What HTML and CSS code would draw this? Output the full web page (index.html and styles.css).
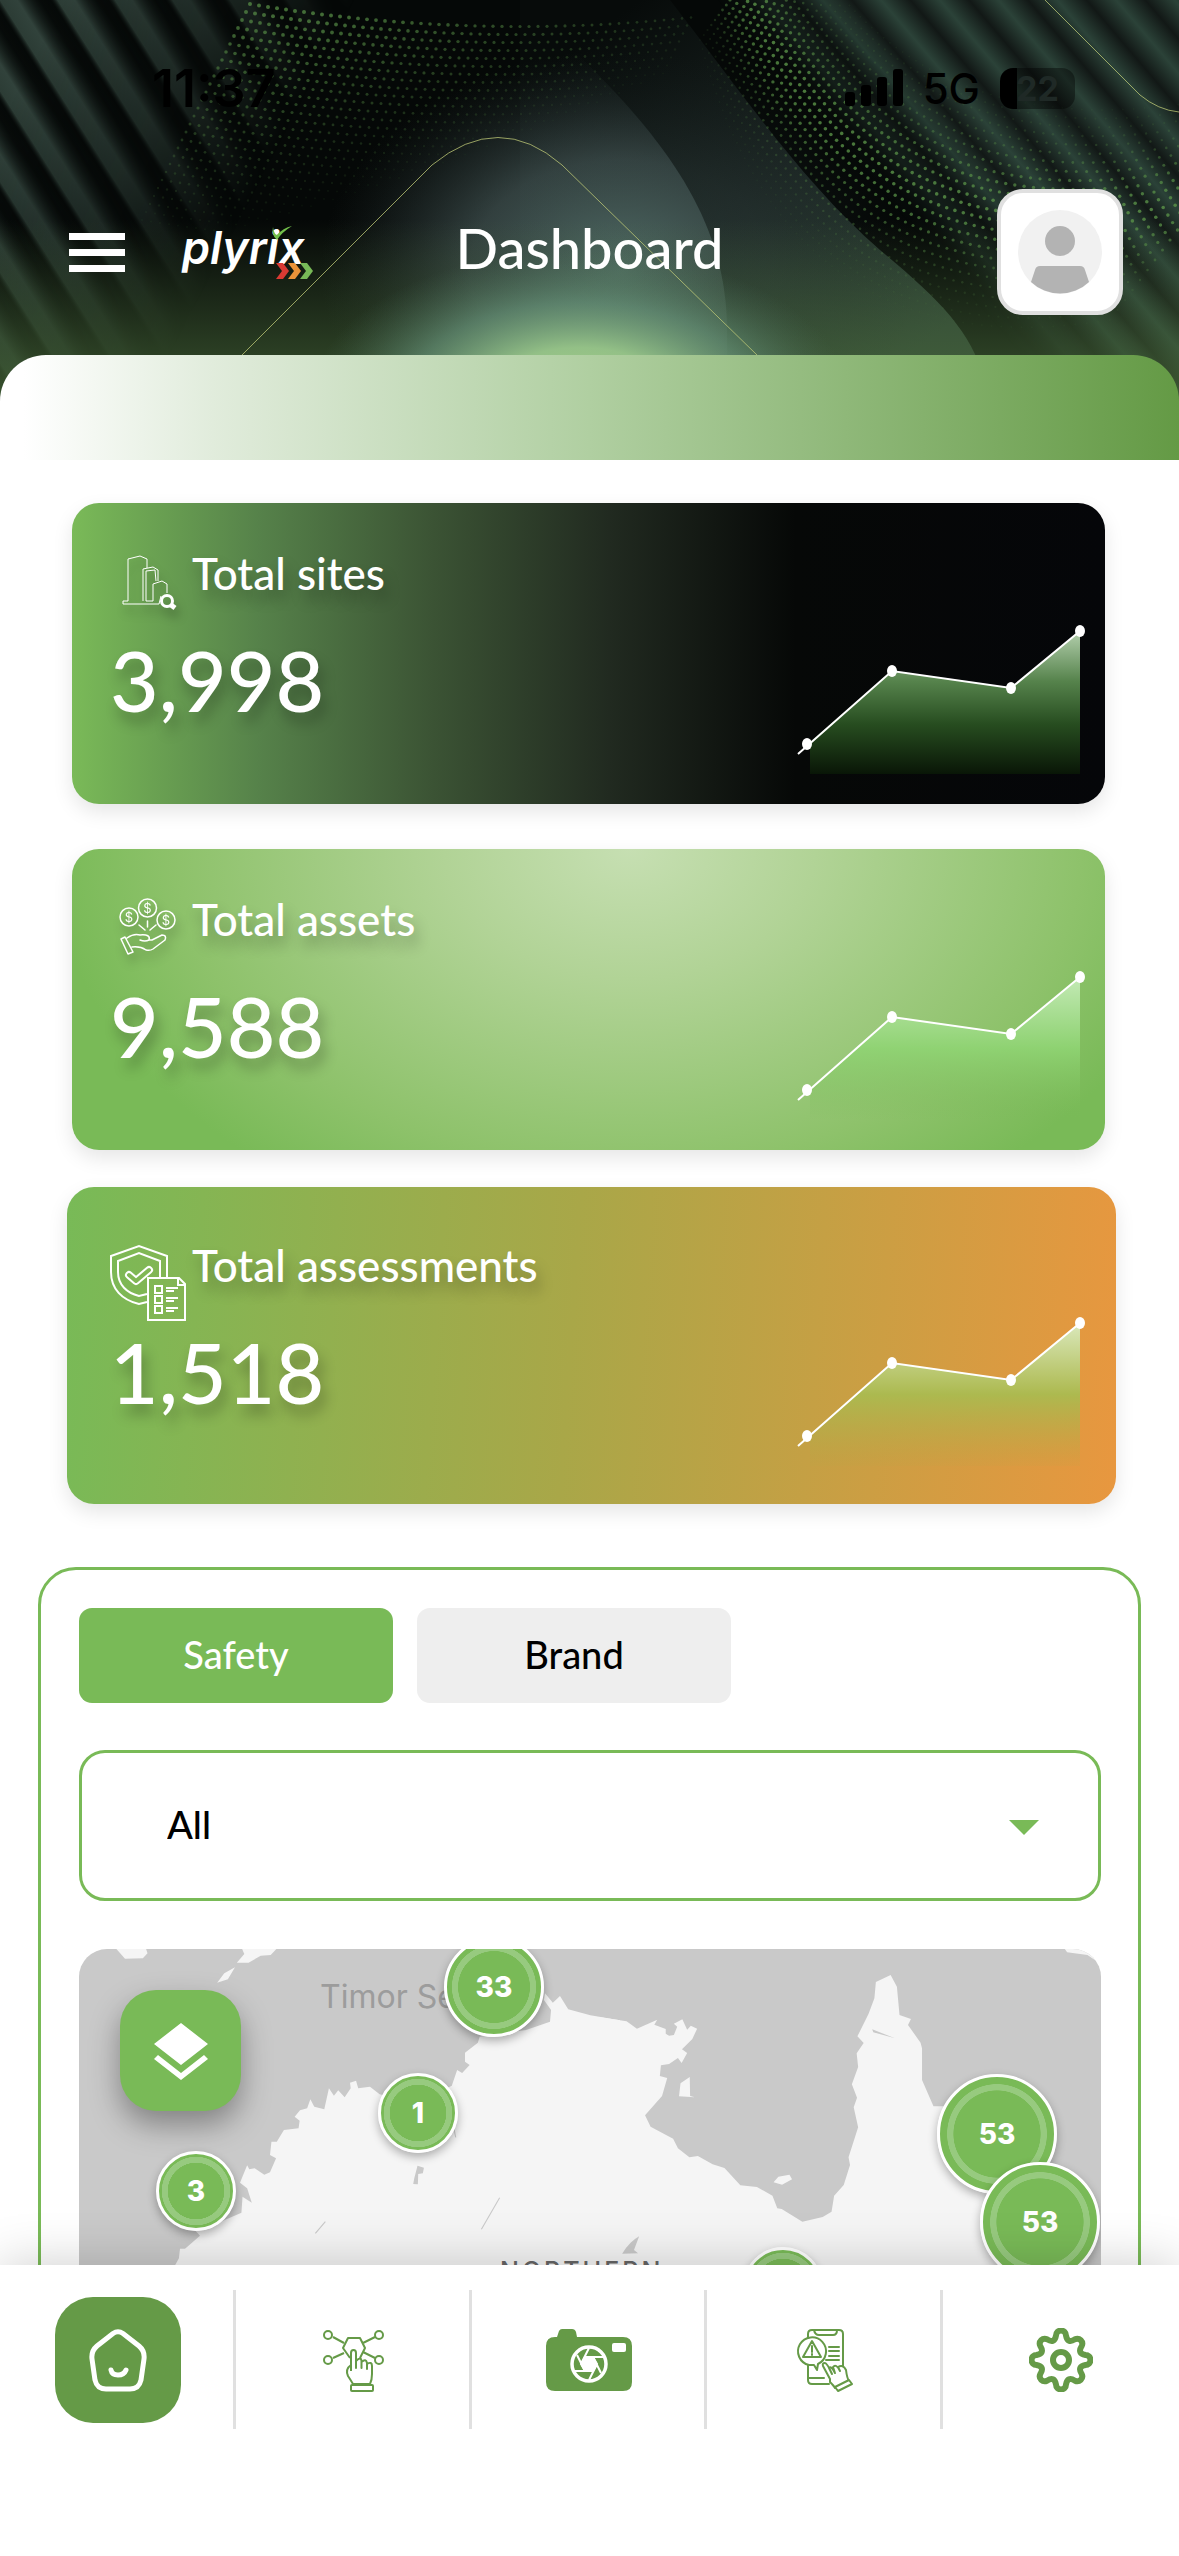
FILE: index.html
```html
<!DOCTYPE html>
<html lang="en">
<head>
<meta charset="utf-8">
<meta name="viewport" content="width=device-width, initial-scale=1">
<title>Plyrix – Dashboard</title>
<link rel="stylesheet" href="styles.css">
</head>
<body>
<div class="app">
  <main class="content">
    <header class="hero">
      <svg class="hero-art" viewBox="0 0 1179 460" preserveAspectRatio="none" aria-hidden="true">
        <defs>
          <linearGradient id="stripeL" gradientUnits="userSpaceOnUse" x1="0" y1="0" x2="41" y2="-26" spreadMethod="repeat">
            <stop offset="0" stop-color="#2c3c35"/><stop offset=".3" stop-color="#31423b"/><stop offset=".7" stop-color="#0a0f0d" stop-opacity=".4"/><stop offset=".88" stop-color="#0a0f0d" stop-opacity=".2"/><stop offset="1" stop-color="#2c3c35"/>
          </linearGradient>
          <linearGradient id="stripeR" gradientUnits="userSpaceOnUse" x1="0" y1="0" x2="34" y2="-29" spreadMethod="repeat">
            <stop offset="0" stop-color="#2b4238"/><stop offset=".5" stop-color="#121816"/><stop offset="1" stop-color="#2b4238"/>
          </linearGradient>
          <linearGradient id="fadeL" gradientUnits="userSpaceOnUse" x1="0" y1="120" x2="230" y2="240">
            <stop offset="0" stop-color="#fff"/><stop offset=".5" stop-color="#fff" stop-opacity=".6"/><stop offset="1" stop-color="#fff" stop-opacity="0"/>
          </linearGradient>
          <linearGradient id="fadeR" gradientUnits="userSpaceOnUse" x1="880" y1="190" x2="950" y2="130">
            <stop offset="0" stop-color="#fff" stop-opacity="0"/><stop offset="1" stop-color="#fff"/>
          </linearGradient>
          <mask id="maskL"><rect width="420" height="460" fill="url(#fadeL)"/></mask>
          <mask id="maskR"><rect x="700" width="479" height="460" fill="url(#fadeR)"/></mask>
          <radialGradient id="haze" gradientUnits="userSpaceOnUse" cx="0" cy="0" r="1" gradientTransform="translate(620 270) scale(300 220)">
            <stop offset="0" stop-color="#4f6a64"/><stop offset=".5" stop-color="#384746" stop-opacity=".85"/><stop offset="1" stop-color="#1a2322" stop-opacity="0"/>
          </radialGradient>
          <radialGradient id="glow" gradientUnits="userSpaceOnUse" cx="0" cy="0" r="1" gradientTransform="translate(580 400) scale(270 150)">
            <stop offset="0" stop-color="#a9d488"/><stop offset=".35" stop-color="#9ccb8e" stop-opacity=".9"/><stop offset=".65" stop-color="#6f9f86" stop-opacity=".55"/><stop offset="1" stop-color="#4b6e5c" stop-opacity="0"/>
          </radialGradient>
          <linearGradient id="floor" x1="0" y1="0" x2="0" y2="1">
            <stop offset="0" stop-color="#47663a" stop-opacity="0"/><stop offset="1" stop-color="#4b6e3b"/>
          </linearGradient>
          <linearGradient id="fold" gradientUnits="userSpaceOnUse" x1="640" y1="0" x2="900" y2="360">
            <stop offset="0" stop-color="#070b0a"/><stop offset=".5" stop-color="#1b2523"/><stop offset="1" stop-color="#2f4438"/>
          </linearGradient>
          <clipPath id="coreClip"><path d="M0 0H520C640 110 727 200 727 330V460H0Z"/></clipPath>
        </defs>
        <rect width="1179" height="460" fill="#050807"/>
        <rect width="420" height="460" fill="url(#stripeL)" mask="url(#maskL)"/>
        <rect x="700" width="479" height="460" fill="url(#stripeR)" mask="url(#maskR)"/>
        <path d="M520 0H670C740 90 800 180 880 250C940 300 970 330 985 380V460H520Z" fill="url(#fold)"/>
        <g clip-path="url(#coreClip)"><rect x="300" y="0" width="480" height="460" fill="url(#haze)"/></g>
        <rect x="300" y="40" width="640" height="420" fill="url(#haze)" opacity=".25"/>
        <g id="dots" fill="#5b9449"></g>
        <rect y="220" width="1179" height="240" fill="url(#floor)"/>
        <rect x="260" y="200" width="640" height="260" fill="url(#glow)"/>
        <path d="M242 355L432 165Q499 110 562 165L757 355M1045 0L1140 95Q1158 110 1179 112" fill="none" stroke="#c2cc78" stroke-opacity=".75"/>
      </svg>
      <div class="status">
        <span class="clock">11:37</span>
        <span class="radio">
          <svg width="58" height="38" viewBox="0 0 58 38" aria-hidden="true"><rect y="23" width="10" height="14" rx="3"/><rect x="16" y="16" width="10" height="21" rx="3"/><rect x="32" y="8" width="10" height="29" rx="3"/><rect x="48" width="10" height="37" rx="3"/></svg>
          <span class="network">5G</span>
          <span class="battery">22</span>
        </span>
      </div>
      <div class="topbar">
        <div class="brand">
          <button class="menu" aria-label="Menu"><i></i><i></i><i></i></button>
          <a class="logo" href="#">plyrix<svg class="logo-mark" viewBox="0 0 60 54" aria-hidden="true"><path d="M19 1Q20 8 23 9Q29 2 38 0Q28 6 23 14Q17 9 19 1Z" fill="#72bf4b"/><path d="M22 37h7l6 8-6 8h-7l6-8z" fill="#d93a33"/><path d="M34 37h7l6 8-6 8h-7l6-8z" fill="#ea9339"/><path d="M46 37h7l6 8-6 8h-7l6-8z" fill="#78ba57"/></svg></a>
        </div>
        <h1 class="title">Dashboard</h1>
        <button class="avatar" aria-label="Profile">
          <svg width="84" height="84" viewBox="0 0 84 84" aria-hidden="true"><circle cx="42" cy="42" r="42" fill="#f1f1f1"/><circle cx="42" cy="31" r="15" fill="#b3b3b3"/><path d="M22 56H62Q66 56 67 60L71 72A42 42 0 0 1 13 72L17 60Q18 56 22 56Z" fill="#b3b3b3"/></svg>
        </button>
      </div>
      <div class="band"></div>
    </header>

    <svg class="defs" width="0" height="0" aria-hidden="true">
      <defs>
        <path id="area" d="M14 118L96 47L215 64L284 7V150H14Z"/>
        <g id="trend"><path d="M2 130L96 47L215 64L284 7" fill="none" stroke="#fff" stroke-width="2"/><g fill="#fff"><ellipse cx="11" cy="120" rx="5" ry="6"/><ellipse cx="96" cy="47" rx="5" ry="6"/><ellipse cx="215" cy="64" rx="5" ry="6"/><ellipse cx="284" cy="7" rx="5" ry="6"/></g></g>
      </defs>
    </svg>

    <section class="stats">
      <article class="card card-sites">
        <div class="figures">
          <div class="card-head">
            <svg class="card-icon shade" viewBox="0 0 76 78" aria-hidden="true"><g fill="none" stroke="#fff"><path d="M18 50V8L30 5L37 8V17M33 50V18L43 16L48 19V30M36 50V20L45 19L46 30M43 50V33L52 30L57 33V42M43 50H36M18 50H13V53H49L51 45"/><circle cx="57" cy="50" r="5.500" stroke-width="3"/><path d="M61 54L65 57" stroke-width="5"/></g></svg>
            <h2>Total sites</h2>
          </div>
          <p class="value">3,998</p>
        </div>
        <svg class="chart" viewBox="0 0 289 152" aria-hidden="true">
          <linearGradient id="a1" x1="0" y1="0" x2="0" y2="1"><stop offset="0" stop-color="#b4d0ae"/><stop offset=".35" stop-color="#56834c"/><stop offset=".65" stop-color="#274d20"/><stop offset="1" stop-color="#091607"/></linearGradient>
          <use href="#area" fill="url(#a1)"/><use href="#trend"/>
        </svg>
      </article>
      <article class="card card-assets">
        <div class="figures">
          <div class="card-head">
            <svg class="card-icon shade" viewBox="0 0 76 78" aria-hidden="true"><g fill="none" stroke="#fff" stroke-width="1.500" stroke-linecap="round" stroke-linejoin="round"><circle cx="19" cy="20" r="9"/><circle cx="37.500" cy="11" r="9"/><circle cx="56" cy="23" r="9"/><path d="M29 28L35 33M37.500 24V30M46 28L40 33M11 42L15 40L23 55L18 57ZM17 41Q24 36 30 38Q41 37 39 43Q35 45 30 43M39 43H42L52 38Q57 38 55 43L43 52Q40 54 36 53Q30 49 22 50"/></g><g fill="#fff" class="coin"><text x="19" y="25">$</text><text x="37.500" y="16">$</text><text x="56" y="28">$</text></g></svg>
            <h2>Total assets</h2>
          </div>
          <p class="value">9,588</p>
        </div>
        <svg class="chart" viewBox="0 0 289 152" aria-hidden="true">
          <linearGradient id="a2" x1="0" y1="0" x2="0" y2="1"><stop offset="0" stop-color="#c4eab6"/><stop offset=".5" stop-color="#8fd473" stop-opacity=".9"/><stop offset="1" stop-color="#79ba57" stop-opacity="0"/></linearGradient>
          <use href="#area" fill="url(#a2)"/><use href="#trend"/>
        </svg>
      </article>
      <article class="card card-assessments">
        <div class="figures">
          <div class="card-head">
            <svg class="card-icon" viewBox="0 0 76 78" aria-hidden="true"><g fill="none" stroke="#fff" stroke-width="2"><path d="M57 35V13L29 3L1 13V29C1 46 12 57 29 61L37 59M50 35V18L29 10L8 18V29C8 42 17 50 29 53L37 51"/><path d="M38 35H69L75 41V77H38ZM68 35V42H75"/><path d="M45 43h7v7h-7zM45 53h7v7h-7zM45 63h7v7h-7zM56 45h12M56 48h8M56 55h12M56 58h8M56 65h12M56 68h8"/><path d="M19 32L26 38L39 27" stroke-width="8" stroke-linecap="round" stroke-linejoin="round"/><path d="M19 32L26 38L39 27" stroke="#80b755" stroke-width="4" stroke-linecap="round" stroke-linejoin="round"/></g></svg>
            <h2>Total assessments</h2>
          </div>
          <p class="value">1,518</p>
        </div>
        <svg class="chart" viewBox="0 0 289 152" aria-hidden="true">
          <linearGradient id="a3" x1="0" y1="0" x2="0" y2="1"><stop offset="0" stop-color="#dbe9bd"/><stop offset=".5" stop-color="#aabb50" stop-opacity=".95"/><stop offset="1" stop-color="#b5a744" stop-opacity=".1"/></linearGradient>
          <use href="#area" fill="url(#a3)"/><use href="#trend"/>
        </svg>
      </article>
    </section>

    <section class="panel">
      <div class="tabs">
        <button class="tab tab-active">Safety</button>
        <button class="tab">Brand</button>
      </div>
      <div class="filter">
        <select aria-label="Filter"><option>All</option></select>
        <svg class="caret" width="30" height="15" viewBox="0 0 30 15" aria-hidden="true"><path d="M0 0H30L15 15Z" fill="#79ba57"/></svg>
      </div>
      <div class="map">
        <svg class="map-land" width="1021" height="600" viewBox="0 0 1021 600" aria-hidden="true">
          <g transform="translate(-19 -19) scale(.35714 .33333)">
            <path fill="#f5f5f5" d="M320 1010L333 985L336 956H350L392 917L380 903L440 880L508 848L511 800L537 818L524 775L504 758L524 706L530 718L545 715L572 734L588 727L605 685L588 675L592 635H607L627 600L668 595L671 572L657 560L672 541L692 535L701 508L712 530L740 538L753 475L767 497L779 481L797 502L814 475L812 458L829 452L835 475L868 470L895 493L1000 520L1097 467L1112 420L1126 429L1147 405L1134 395V368L1170 338L1175 320L1305 300L1372 275L1375 240L1355 210L1358 190L1380 218L1400 198L1423 238L1485 256L1568 271V1900H200ZM158 57L182 86L232 85L245 70L239 50ZM510 57L516 72L495 98H528L562 77L590 75L612 50ZM490 112L460 130L440 158L470 148Z"/>
            <path fill="#c9c9c9" d="M1001 707L1019 713L1016 730L1003 732L1002 763L989 762L992 745Z"/>
            <path fill="none" stroke="#c9c9c9" stroke-width="3" d="M715 910L743 875M1180 898L1231 803M1100 580L1108 622"/>
          </g>
          <g transform="translate(521 -19) scale(.3693 .33333)">
            <path fill="#f5f5f5" d="M0 262L72 274L100 296L155 269L147 284L178 297V311L187 317L200 315L209 290L200 281L223 268L236 299L246 287L263 296L250 327L222 358L236 369L221 399L211 384L187 402L165 406L162 438L182 444L168 498L122 556L137 590L198 626L211 655L242 682L265 678L305 703L337 714L380 766L425 771L467 797L480 835L492 837L548 875L603 861L627 845L634 797L660 765L677 705L673 682L699 592L687 532L696 503L682 463L699 411L695 370L714 339L697 319L727 252L743 205L747 156L787 135L804 170L811 255L842 267L834 285L868 338L872 355V450L903 529H930L1000 700L1150 850L1220 1010V1900H0ZM218 460L243 441L244 498L257 502L214 499ZM470 757L483 740L513 734L520 748L493 764ZM1254 50L1265 67L1320 75L1340 90L1370 50Z"/>
            <path fill="#c9c9c9" d="M737 298L799 325L740 307ZM60 971Q80 935 106 919L92 960L103 970Z"/>
          </g>
        </svg>
        <span class="sea">Timor Sea</span>
        <span class="region">NORTHERN</span>
        <span class="pin pin-l" style="left:365px;top:-12px">33</span>
        <span class="pin" style="left:299px;top:124px">1</span>
        <span class="pin" style="left:77px;top:202px">3</span>
        <span class="pin pin-xl" style="left:858px;top:125px">53</span>
        <span class="pin pin-xl" style="left:901px;top:213px">53</span>
        <span class="pin" style="left:664px;top:298px"></span>
        <button class="layers" aria-label="Map layers"><svg width="54" height="58" viewBox="0 0 54 58" aria-hidden="true"><path fill="#fff" d="M27 1L54 22L27 43L0 22ZM4 33L27 51L50 33L54 37L27 58L0 37Z"/></svg></button>
      </div>
    </section>
  </main>

  <nav class="tabbar" aria-label="Main">
    <a class="nav-item" href="#" aria-label="Home"><span class="nav-active"><svg width="64" height="64" viewBox="0 0 64 64" fill="none" stroke="#fff" stroke-width="5" stroke-linecap="round"><path d="M27 5.500Q32 2 37 5.500L53 18Q59 23 58 31L55 52Q53 61 44 61H20Q11 61 9 52L6 31Q5 23 11 18Z"/><path d="M25 42Q26 47 32 47T40 42"/></svg></span></a>
    <a class="nav-item" href="#" aria-label="Network"><svg width="64" height="64" viewBox="0 0 64 64" fill="none" stroke="#659a47" stroke-width="2" stroke-linejoin="round"><circle cx="6" cy="7" r="4"/><circle cx="57" cy="7" r="4"/><circle cx="6" cy="32" r="4"/><circle cx="57" cy="32" r="4"/><path d="M11 9L22 15M53 9L41 15M11 30L22 25M53 30L41 24M28 30L21 20L26 10H38L43 20L38 30"/><path fill="#fff" d="M29 43V25Q29 22 31.500 22Q34 22 34 25V40V33Q39 28 39.500 33V40V34Q44 30 45 35V41V36Q50 33 50 38V46Q50 52 48 56H31Q28 51 26 48Q23 41 29 37"/><rect x="29" y="57" width="22" height="6" rx="1"/></svg></a>
    <a class="nav-item" href="#" aria-label="Camera"><svg width="88" height="64" viewBox="0 0 88 64"><path fill="#659a47" d="M10 9H12L14 3Q15 1 17 1H27Q30 1 31 4L32 9H78Q87 9 87 18V54Q87 63 78 63H10Q1 63 1 54V18Q1 9 10 9Z"/><rect x="67" y="15" width="14" height="9" rx="2" fill="#fff"/><circle cx="44" cy="36" r="17" fill="none" stroke="#fff" stroke-width="3.500"/><path fill="#fff" stroke="#fff" stroke-width="2" d="M40 29H48L52 36L48 43H40L36 36Z"/><path stroke="#fff" stroke-width="2" d="M40 29H58M48 29L56 45M52 36L44 52M48 43H30M40 43L32 27M36 36L44 20"/></svg></a>
    <a class="nav-item" href="#" aria-label="Reports"><svg width="64" height="64" viewBox="0 0 64 64" fill="none" stroke="#659a47" stroke-width="2" stroke-linejoin="round" stroke-linecap="round"><path d="M15 10V6Q15 2 19 2H46Q50 2 50 6V38M15 36V52Q15 56 19 56H36M15 50H31M21 2Q22 7 26 7H40Q44 7 44 2"/><path fill="#fff" d="M16 37A14 14 0 1 1 25 36L24 42L21 37Z"/><path d="M19 13L28 29H10ZM19 18V24M19 26V27M36 19H46M36 23H46M36 28H46M33 32H46"/><path fill="#fff" d="M37 51L30 38Q29 35 32 35Q34 35 39 46L36 40Q38 37 42 45L40 39Q43 35 47 43L45 39Q50 36 53 42Q54 50 56 53L42 60Q41 58 37 54Z"/><path fill="#fff" d="M42 59L56 52L59 56L45 63Z"/></svg></a>
    <a class="nav-item" href="#" aria-label="Settings"><svg width="64" height="64" viewBox="-32 -32 64 64" fill="none" stroke="#659a47" stroke-width="6"><path d="M-5-24.500A5 5 0 0 1 5-24.500Q6.500-16 14-20.700A5 5 0 0 1 20.700-14Q16-6.500 24.500-5A5 5 0 0 1 24.500 5Q16 6.500 20.700 14A5 5 0 0 1 14 20.700Q6.500 16 5 24.500A5 5 0 0 1-5 24.500Q-6.500 16-14 20.700A5 5 0 0 1-20.700 14Q-16 6.500-24.500 5A5 5 0 0 1-24.500-5Q-16-6.500-20.700-14A5 5 0 0 1-14-20.700Q-6.500-16-5-24.500Z"/><circle r="8"/></svg></a>
  </nav>
</div>
<script src="dots.js"></script>
</body>
</html>
```
FILE: styles.css
```css
* { box-sizing: border-box; }

:root {
  --green: #79ba57;
  --green-dark: #659a47;
  --text-font: Lato, "Open Sans", sans-serif;
  --ui-font: Inter, "Liberation Sans", sans-serif;
}

body {
  margin: 0;
  background: #fff;
  color: #000;
  font-family: var(--text-font);
}

button {
  border: 0;
  padding: 0;
  font-family: inherit;
  cursor: pointer;
}

svg { display: block; }

h1, h2, p { margin: 0; }

.app {
  display: flex;
  flex-direction: column;
  height: 100vh;
}

.content {
  flex: 1;
  min-height: 0;
  overflow-y: auto;
  scrollbar-width: none;
}

.defs { position: absolute; }

/* Header */
.hero {
  position: relative;
  overflow: hidden;
}

.hero-art {
  position: absolute;
  inset: 0;
  width: 100%;
  height: 100%;
}

.status {
  position: relative;
  display: flex;
  justify-content: space-between;
  align-items: center;
  height: 176px;
  padding: 0 104px 0 152px;
  font-family: var(--ui-font);
}

.clock {
  font-size: 52px;
  font-weight: 600;
}

.radio {
  display: flex;
  align-items: center;
  gap: 20px;
}

.network {
  font-size: 42px;
  font-weight: 500;
}

.battery {
  width: 75px;
  height: 41px;
  border-radius: 13px;
  background: linear-gradient(90deg, #000 17px, rgba(0, 0, 0, .4) 17px);
  color: #1f2926;
  font-size: 34px;
  font-weight: 700;
  line-height: 41px;
  text-align: center;
}

.topbar {
  position: relative;
  display: grid;
  grid-template-columns: 1fr auto 1fr;
  align-items: center;
  height: 152px;
  margin-bottom: 27px;
  padding: 0 56px;
}

.brand {
  display: flex;
  align-items: center;
  gap: 57px;
  padding-left: 13px;
}

.menu {
  display: grid;
  gap: 9px;
  width: 56px;
  background: none;
}

.menu i {
  height: 7px;
  background: #fff;
}

.logo {
  position: relative;
  padding-bottom: 8px;
  color: #fff;
  font-family: var(--ui-font);
  font-size: 45px;
  font-style: italic;
  font-weight: 600;
  line-height: 48px;
  text-decoration: none;
}

.logo-mark {
  position: absolute;
  right: -10px;
  top: 2px;
  width: 60px;
  height: 54px;
}

.title {
  padding-bottom: 8px;
  color: #fff;
  font-size: 56px;
  font-weight: 500;
  line-height: 64px;
}

.avatar {
  display: grid;
  place-items: center;
  justify-self: end;
  width: 126px;
  height: 126px;
  border: 4px solid #e0e0e0;
  border-radius: 26px;
  background: #fff;
}

.band {
  position: relative;
  height: 105px;
  border-radius: 46px 46px 0 0;
  background: linear-gradient(90deg, #fff 2%, #e1ecdc 18%, #b0cfa1 50%, #649a45 100%);
}

/* Stat cards */
.stats {
  display: grid;
  gap: 45px;
  padding: 43px 74px 63px 72px;
}

.card {
  display: flex;
  justify-content: space-between;
  height: 301px;
  padding: 48px 20px 28px 38px;
  border-radius: 27px;
  box-shadow: 0 8px 20px rgba(0, 0, 0, .1);
  color: #fff;
}

.card-sites {
  background: linear-gradient(90deg, #7aba58 0%, #56824a 18%, #3b5334 35%, #212a20 52%, #060807 70%, #050609 100%);
}

.card-assets {
  background: radial-gradient(ellipse 56% 135% at 54% 0%, #c6dfb2 0%, #b1d396 32%, #8ec26b 78%, #79ba57 100%);
}

.card-assessments {
  height: 317px;
  margin: -8px -11px 0 -5px;
  padding: 56px 31px 36px 43px;
  background: linear-gradient(94deg, #78ba57 0%, #a9a748 48%, #e8973f 100%);
}

.card-head {
  display: flex;
  gap: 6px;
}

.card-icon {
  width: 76px;
  height: 78px;
}

.shade { filter: drop-shadow(3px 8px 5px rgba(0, 0, 0, .3)); }

.coin {
  font-family: var(--ui-font);
  font-size: 13px;
  text-anchor: middle;
}

.card h2 {
  font-size: 44px;
  font-weight: 500;
  line-height: 44px;
  text-shadow: 4px 10px 14px rgba(0, 0, 0, .28);
}

.value {
  font-size: 84px;
  font-weight: 500;
  line-height: 102px;
  text-shadow: 4px 10px 14px rgba(0, 0, 0, .28);
}

.chart {
  align-self: flex-end;
  width: 289px;
  height: 152px;
}

/* Map panel */
.panel {
  margin: 0 38px;
  padding: 38px 37px 40px 38px;
  border: 3px solid var(--green);
  border-radius: 38px;
}

.tabs {
  display: flex;
  gap: 24px;
}

.tab {
  width: 314px;
  height: 95px;
  padding-bottom: 4px;
  border-radius: 13px;
  background: #eee;
  color: #000;
  font-size: 38px;
  font-weight: 500;
}

.tab-active {
  background: var(--green);
  color: #fff;
}

.filter {
  position: relative;
  margin: 47px 0 48px;
}

.filter select {
  appearance: none;
  width: 100%;
  height: 151px;
  padding: 0 85px 4px;
  border: 3px solid var(--green);
  border-radius: 26px;
  background: #fff;
  color: #000;
  font-family: inherit;
  font-size: 38px;
  font-weight: 500;
}

.caret {
  position: absolute;
  right: 62px;
  top: 70px;
}

.map {
  position: relative;
  height: 600px;
  border-radius: 28px;
  background: #c9c9c9;
  overflow: hidden;
}

.sea,
.region {
  position: absolute;
  font-family: var(--ui-font);
}

.sea {
  left: 241px;
  top: 28px;
  color: #9c9c9c;
  font-size: 32px;
  line-height: 40px;
}

.region {
  left: 421px;
  top: 308px;
  color: #666;
  font-size: 25px;
  font-weight: 500;
  line-height: 28px;
  letter-spacing: 3px;
}

.pin {
  position: absolute;
  display: grid;
  place-items: center;
  width: 80px;
  height: 80px;
  border: 3px solid #fff;
  border-radius: 50%;
  background: radial-gradient(closest-side, var(--green) 76%, #97ca7f 77%, #97ca7f 92%, var(--green) 93%);
  box-shadow: 0 4px 10px rgba(0, 0, 0, .3);
  color: #fff;
  font-family: var(--ui-font);
  font-size: 28px;
  font-weight: 800;
}

.pin-l {
  width: 100px;
  height: 100px;
  background: radial-gradient(closest-side, var(--green) 76%, #97ca7f 77%, #97ca7f 89%, var(--green) 90%);
}

.pin-xl {
  width: 120px;
  height: 120px;
  background: radial-gradient(closest-side, var(--green) 76%, #97ca7f 77%, #97ca7f 87%, var(--green) 88%);
}

.layers {
  position: absolute;
  left: 41px;
  top: 41px;
  display: grid;
  place-items: center;
  width: 121px;
  height: 121px;
  border-radius: 36px;
  background: var(--green);
  box-shadow: 0 14px 30px rgba(0, 0, 0, .35);
}

/* Bottom navigation */
.tabbar {
  position: relative;
  display: grid;
  grid-template-columns: repeat(5, 1fr);
  padding: 25px 0 127px;
  background: #fff;
  box-shadow: 0 0 50px rgba(0, 0, 0, .2);
}

.nav-item {
  display: grid;
  place-items: center;
  height: 139px;
  padding-left: 3px;
  border-right: 3px solid #e0e0e0;
}

.nav-item:last-child {
  padding-left: 0;
  border-right: 0;
}

.nav-active {
  display: grid;
  place-items: center;
  width: 126px;
  height: 126px;
  border-radius: 38px;
  background: var(--green-dark);
}
```
FILE: dots.js
```js
// Halftone dot fields behind the header.
const field = document.getElementById('dots');
const SVG = 'http://www.w3.org/2000/svg';

function dot(x, y, r, opacity) {
  if (opacity < 0.05 || x < 0 || x > 1182 || y < 0 || y > 380) return;
  const c = document.createElementNS(SVG, 'circle');
  c.setAttribute('cx', x.toFixed(1));
  c.setAttribute('cy', y.toFixed(1));
  c.setAttribute('r', r.toFixed(1));
  c.setAttribute('opacity', opacity.toFixed(2));
  field.appendChild(c);
}

// Left field: a slanted grid that fades towards its lower right.
for (let row = 0; row < 32; row++) {
  for (let col = 0; col < 50; col++) {
    const x = 250 - row * 4 + col * 9;
    const y = 4 + row * 8 + col * 1.5 - (col * col) / 40;
    const fade = 1 - row / 30 - Math.max(0, col - 8) / 60;
    dot(x, y, 1 + Math.max(0, fade), fade * 0.7);
  }
}

// Right field: copies of one sweeping curve, brightest along its spine.
for (let line = -16; line <= 18; line++) {
  for (let i = 0; i <= 62; i++) {
    const t = i / 62;
    const u = 1 - t;
    const x = u * u * u * 745 + 3 * u * u * t * 810 + 3 * u * t * t * 940 + t * t * t * 1200;
    const y = u * u * u * -20 + 3 * u * u * t * 150 + 3 * u * t * t * 260 + t * t * t * 200;
    const step = 5 + t * 5;
    const glow = Math.exp(-Math.pow(line / 7, 2));
    dot(x - line * step * 0.75, y + line * step, 1 + glow * 0.8, 0.2 + glow * 0.6 - Math.abs(line) / 75);
  }
}
```
